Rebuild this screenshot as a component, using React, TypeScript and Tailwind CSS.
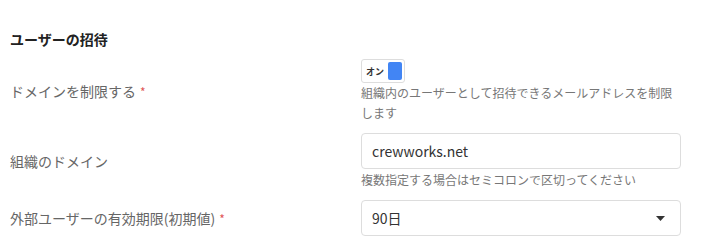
import React from 'react';

const font = { fontFamily: '"Noto Sans CJK JP", "Noto Sans", sans-serif' };

function Row({ label, required, children }: { label: string; required?: boolean; children: React.ReactNode }) {
  return (
    <div className="flex items-center">
      <div className="w-[351px] shrink-0 text-[14px] text-[#666]">
        {label}
        {required && <span className="ml-1 text-[12px] text-[#e05656]">*</span>}
      </div>
      <div className="w-[320px]">{children}</div>
    </div>
  );
}

export default function App() {
  return (
    <div className="w-[706px] h-[245px] overflow-hidden bg-white pl-[10px] pt-[29px]" style={font}>
      <div className="text-[14px] font-bold text-[#222] leading-5">ユーザーの招待</div>

      <div className="mt-[10px] flex flex-col gap-[10px]">
        <Row label="ドメインを制限する" required>
          <div className="flex h-6 w-[44px] items-center justify-between rounded-[3px] border border-[#ddd] bg-white pl-[4px] pr-[2px]">
            <span className="whitespace-nowrap text-[9px] font-bold leading-none text-[#333]">オン</span>
            <span className="h-[18px] w-[14px] rounded-[2px] bg-[#4285f4]" />
          </div>
          <p className="text-[12px] leading-[20px] text-[#777] whitespace-nowrap">
            組織内のユーザーとして招待できるメールアドレスを制限
            <br />
            します
          </p>
        </Row>

        <Row label="組織のドメイン">
          <div className="flex h-[36px] items-center rounded-[4px] border border-[#ddd] px-[10px] text-[14px] text-[#333]">
            crewworks.net
          </div>
          <p className="mt-[1px] text-[12px] leading-[20px] text-[#777]">
            複数指定する場合はセミコロンで区切ってください
          </p>
        </Row>

        <Row label="外部ユーザーの有効期限(初期値)" required>
          <div className="flex h-[36px] items-center justify-between rounded-[4px] border border-[#ddd] pl-[10px] pr-[15px] text-[14px] text-[#333]">
            <span>90日</span>
            <svg width="9" height="5" viewBox="0 0 9 5">
              <path d="M0 0h9L4.5 5z" fill="#333" />
            </svg>
          </div>
        </Row>
      </div>
    </div>
  );
}
